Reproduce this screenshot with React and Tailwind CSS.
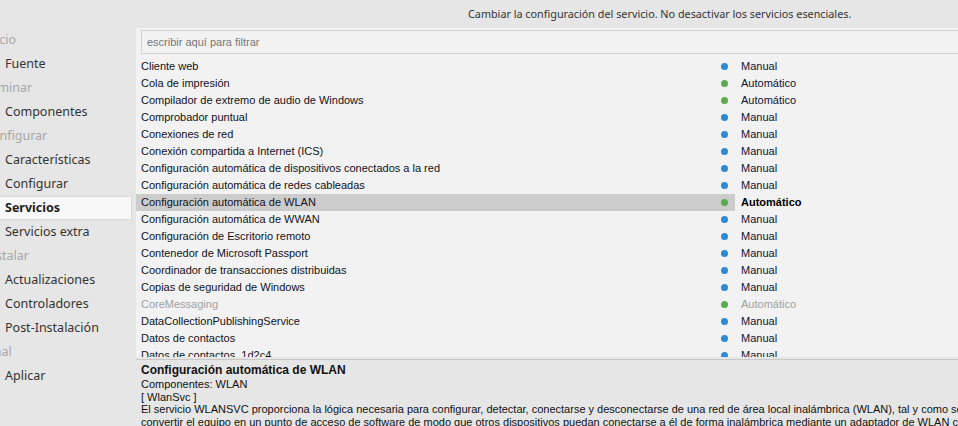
import React from 'react';

const sidebar = [
  { label: 'Inicio', header: true },
  { label: 'Fuente' },
  { label: 'Eliminar', header: true },
  { label: 'Componentes' },
  { label: 'Configurar', header: true },
  { label: 'Características' },
  { label: 'Configurar' },
  { label: 'Servicios', active: true },
  { label: 'Servicios extra' },
  { label: 'Instalar', header: true },
  { label: 'Actualizaciones' },
  { label: 'Controladores' },
  { label: 'Post-Instalación' },
  { label: 'Final', header: true },
  { label: 'Aplicar' },
];

const services = [
  ['Cliente web', 'Manual'],
  ['Cola de impresión', 'Automático'],
  ['Compilador de extremo de audio de Windows', 'Automático'],
  ['Comprobador puntual', 'Manual'],
  ['Conexiones de red', 'Manual'],
  ['Conexión compartida a Internet (ICS)', 'Manual'],
  ['Configuración automática de dispositivos conectados a la red', 'Manual'],
  ['Configuración automática de redes cableadas', 'Manual'],
  ['Configuración automática de WLAN', 'Automático', 'selected'],
  ['Configuración automática de WWAN', 'Manual'],
  ['Configuración de Escritorio remoto', 'Manual'],
  ['Contenedor de Microsoft Passport', 'Manual'],
  ['Coordinador de transacciones distribuidas', 'Manual'],
  ['Copias de seguridad de Windows', 'Manual'],
  ['CoreMessaging', 'Automático', 'disabled'],
  ['DataCollectionPublishingService', 'Manual'],
  ['Datos de contactos', 'Manual'],
  ['Datos de contactos_1d2c4', 'Manual'],
];

const uiFont = { fontFamily: '"Noto Sans", "Open Sans", sans-serif' };
const listFont = { fontFamily: '"Liberation Sans", Arial, sans-serif' };

const ServiceRow = ({ name, mode, state }) => {
  const selected = state === 'selected';
  const disabled = state === 'disabled';
  const auto = mode === 'Automático';
  return (
    <div className="flex h-[17px] items-center text-[11px] leading-[17px]">
      <div
        className={`flex w-[599px] shrink-0 items-center justify-between pl-[5px] pr-[7px] h-full ${
          selected ? 'bg-[#cccccc]' : ''
        }`}
      >
        <span className={disabled ? 'text-[#a0a0a0]' : 'text-[#111122]'}>{name}</span>
        <span
          className={`block h-[7px] w-[7px] rounded-full ${auto ? 'bg-[#57ad48]' : 'bg-[#2a8ad6]'}`}
        />
      </div>
      <span
        className={`pl-[6px] ${
          disabled ? 'text-[#a0a0a0]' : selected ? 'font-bold text-black' : 'text-[#111133]'
        }`}
      >
        {mode}
      </span>
    </div>
  );
};

export default function App() {
  return (
    <div className="flex h-[426px] w-[958px] overflow-hidden bg-[#e6e6e6]">
      {/* sidebar, scrolled a bit to the left */}
      <div className="w-[136px] shrink-0 overflow-hidden pt-[28px]" style={uiFont}>
        <div className="-ml-[13px]">
          {sidebar.map((item, i) =>
            item.header ? (
              <div key={i} className="-ml-[3px] flex h-6 items-center text-[12.5px] text-[#a6a6a6]">
                {item.label}
              </div>
            ) : item.active ? (
              <div
                key={i}
                className="flex h-6 w-[145px] items-center border border-[#dadada] bg-[#f8f8f8] pl-[17px] text-[12.5px] font-bold text-[#222]"
              >
                {item.label}
              </div>
            ) : (
              <div key={i} className="flex h-6 items-center pl-[18px] text-[12.5px] text-[#333]">
                {item.label}
              </div>
            )
          )}
        </div>
      </div>

      {/* main */}
      <div className="flex min-w-0 flex-1 flex-col">
        <div className="flex h-[28px] shrink-0 items-center pl-[332px] text-[10.8px] text-[#333]" style={uiFont}>
          <span className="whitespace-nowrap">
            Cambiar la configuración del servicio. No desactivar los servicios esenciales.
          </span>
        </div>

        <div className="flex flex-1 flex-col bg-[#f2f2f2]">
          <div className="pl-[5px] pt-[2px]">
            <div
              className="flex h-[24px] items-center border border-r-0 border-[#d2d2d2] bg-[#f2f2f2] pl-[5px] text-[11px] text-[#777]"
              style={listFont}
            >
              escribir aquí para filtrar
            </div>
          </div>
          <div className="h-[303px] shrink-0 overflow-hidden whitespace-nowrap pt-[4px]" style={listFont}>
            {services.map(([name, mode, state]) => (
              <ServiceRow key={name} name={name} mode={mode} state={state} />
            ))}
          </div>

          <div className="flex-1 bg-[#e6e6e6] pt-[2px]">
            <div
              className="h-full border-t border-[#c8c8c8] pl-[5px] pt-[3px] whitespace-nowrap"
              style={listFont}
            >
              <div className="text-[12px] font-bold leading-[15px] text-[#111]">
                Configuración automática de WLAN
              </div>
              <div className="text-[11px] leading-[12.5px] text-[#111]">Componentes: WLAN</div>
              <div className="text-[11px] leading-[12.5px] text-[#111]">[ WlanSvc ]</div>
              <div className="text-[11px] leading-[12.5px] text-[#111]">
                El servicio WLANSVC proporciona la lógica necesaria para configurar, detectar, conectarse y desconectarse de una red de área local inalámbrica (WLAN), tal y como se define en los estándares IEEE 802.11.
              </div>
              <div className="text-[11px] leading-[12.5px] text-[#111]">
                convertir el equipo en un punto de acceso de software de modo que otros dispositivos puedan conectarse a él de forma inalámbrica mediante un adaptador de WLAN compatible.
              </div>
            </div>
          </div>
        </div>
      </div>
    </div>
  );
}
